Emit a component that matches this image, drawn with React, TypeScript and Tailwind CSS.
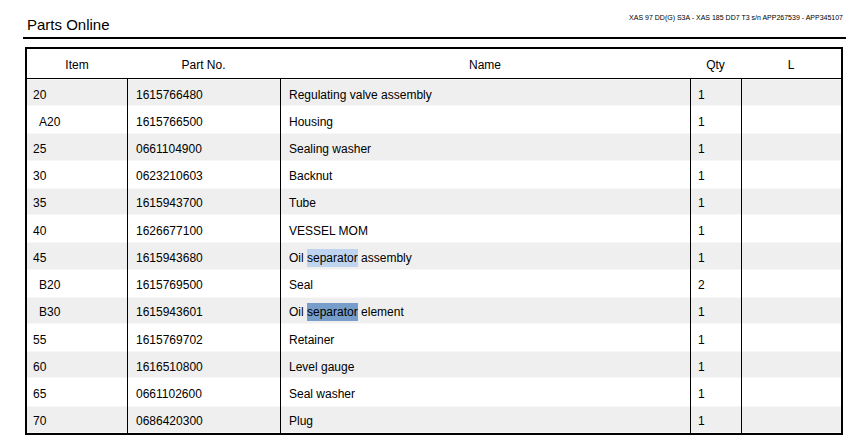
const rows: { item: string; sub?: boolean; part: string; name: React.ReactNode; qty: string }[] = [
  { item: '20', part: '1615766480', name: 'Regulating valve assembly', qty: '1' },
  { item: 'A20', sub: true, part: '1615766500', name: 'Housing', qty: '1' },
  { item: '25', part: '0661104900', name: 'Sealing washer', qty: '1' },
  { item: '30', part: '0623210603', name: 'Backnut', qty: '1' },
  { item: '35', part: '1615943700', name: 'Tube', qty: '1' },
  { item: '40', part: '1626677100', name: 'VESSEL MOM', qty: '1' },
  {
    item: '45',
    part: '1615943680',
    name: (
      <>
        Oil <span className="bg-[#bfd4ee] py-[2px]">separator</span> assembly
      </>
    ),
    qty: '1',
  },
  { item: 'B20', sub: true, part: '1615769500', name: 'Seal', qty: '2' },
  {
    item: 'B30',
    sub: true,
    part: '1615943601',
    name: (
      <>
        Oil <span className="bg-[#779dca] py-[2px]">separator</span> element
      </>
    ),
    qty: '1',
  },
  { item: '55', part: '1615769702', name: 'Retainer', qty: '1' },
  { item: '60', part: '1616510800', name: 'Level gauge', qty: '1' },
  { item: '65', part: '0661102600', name: 'Seal washer', qty: '1' },
  { item: '70', part: '0686420300', name: 'Plug', qty: '1' },
];

export default function App() {
  return (
    <div className="w-[867px] h-[445px] bg-white text-black font-['Liberation_Sans',Arial,sans-serif] pl-[23px] overflow-hidden">
      <div className="w-[823px]">
        <div className="flex justify-between items-start">
          <div className="pt-[16px] pl-[4px] text-[15px] leading-[17px]">Parts Online</div>
          <div className="pt-[14px] pr-[3px] text-[7px] leading-[8px]">
            XAS 97 DD(G) S3A - XAS 185 DD7 T3 s/n APP267539 - APP345107
          </div>
        </div>
        <div className="mt-[4px] h-[2px] bg-black" />

        {/* parts table */}
        <div className="ml-[2px] mt-[8px] w-[818px] border-2 border-black text-[12px]">
          <div className="flex h-[30px] items-center pt-[2px] border-b border-black">
            <div className="w-[100px] text-center">Item</div>
            <div className="w-[153px] text-center">Part No.</div>
            <div className="w-[410px] text-center">Name</div>
            <div className="w-[51px] text-center">Qty</div>
            <div className="w-[100px] text-center">L</div>
          </div>
          {rows.map((r, i) => {
            const bg = i % 2 === 0 ? 'bg-[#efefef] shadow-[inset_0_0.6px_0_#fff,inset_0_-0.6px_0_#fff]' : 'bg-white';
            return (
              <div key={r.item} className="flex h-[27.23px]">
                <div className={`w-[100px] flex items-center pt-[4px] ${r.sub ? 'pl-[12px]' : 'pl-[6px]'} ${bg}`}>{r.item}</div>
                <div className={`w-[153px] flex items-center pt-[4px] pl-[8px] border-l border-black ${bg}`}>{r.part}</div>
                <div className={`w-[410px] flex items-center pt-[4px] pl-[8px] border-l border-black ${bg}`}>
                  <span>{r.name}</span>
                </div>
                <div className={`w-[51px] flex items-center pt-[4px] pl-[7px] border-l border-black ${bg}`}>{r.qty}</div>
                <div className={`w-[100px] border-l border-black ${bg}`} />
              </div>
            );
          })}
        </div>
      </div>
    </div>
  );
}
